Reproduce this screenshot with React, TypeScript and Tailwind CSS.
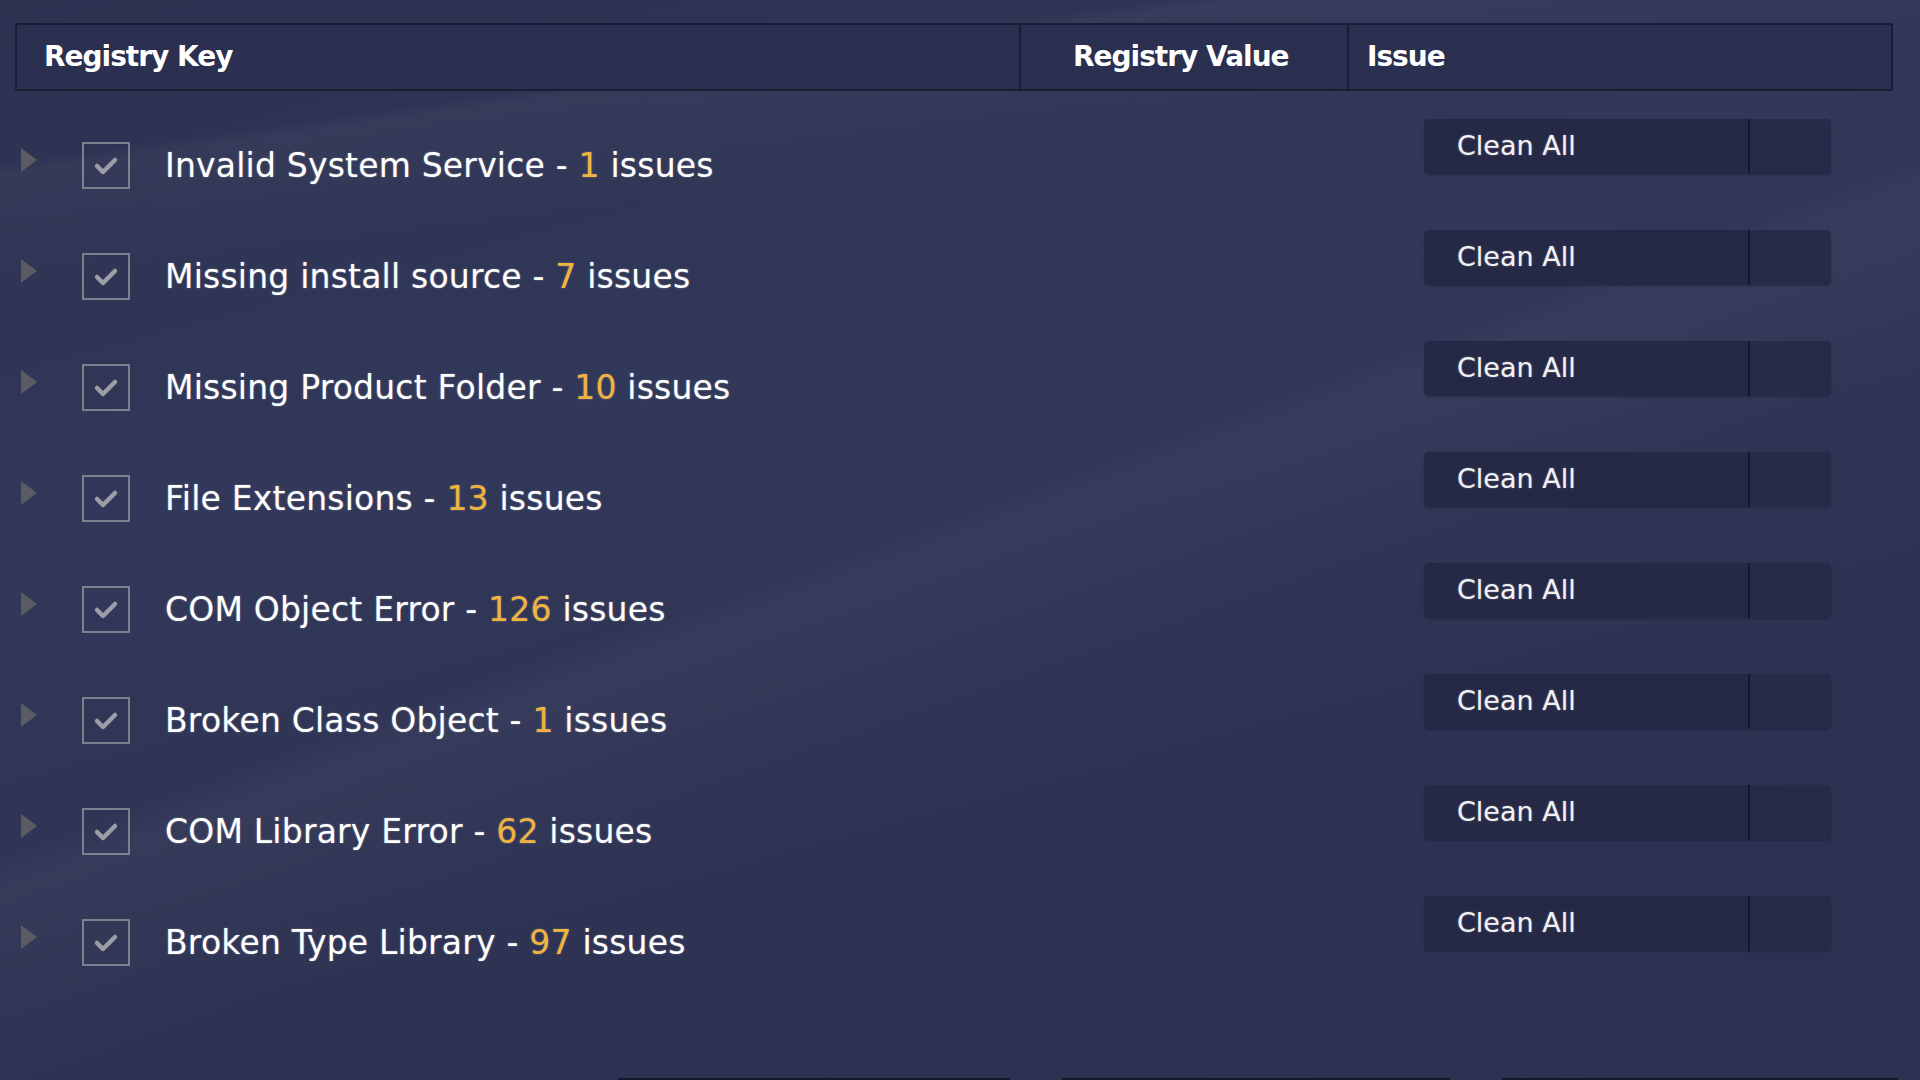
import React from 'react';

interface Category {
  name: string;
  count: number;
}

const categories: Category[] = [
  { name: 'Invalid System Service', count: 1 },
  { name: 'Missing install source', count: 7 },
  { name: 'Missing Product Folder', count: 10 },
  { name: 'File Extensions', count: 13 },
  { name: 'COM Object Error', count: 126 },
  { name: 'Broken Class Object', count: 1 },
  { name: 'COM Library Error', count: 62 },
  { name: 'Broken Type Library', count: 97 },
];

const font = { fontFamily: '"DejaVu Sans", Tahoma, Verdana, sans-serif' };

const Row: React.FC<{ item: Category }> = ({ item }) => (
  <div className="flex h-[111px] items-start">
    {/* expander */}
    <div className="mt-[38px] ml-[5px] w-[18px] h-[26px] flex items-center">
      <svg width="18" height="26" viewBox="0 0 18 26">
        <path d="M1 1 L17 13 L1 25 Z" fill="#5b5c63" />
      </svg>
    </div>

    {/* checkbox */}
    <div className="mt-[33px] ml-[44px] w-[48px] h-[47px] border-2 border-[#7d808f] flex items-center justify-center">
      <svg width="28" height="24" viewBox="0 0 28 24">
        <path d="M5 12 L11 18 L23 6" fill="none" stroke="#9c9da7" strokeWidth="4.5" strokeLinecap="round" strokeLinejoin="round" />
      </svg>
    </div>

    <div
      className="mt-[33px] ml-[35px] h-[47px] flex items-center text-[33px] tracking-[0.2px] text-white [text-shadow:0_0_2px_rgba(255,255,255,0.35)] flex-1 whitespace-pre"
      style={font}
    >
      {item.name} - <span className="text-[#f0b43c]">{item.count}</span> issues
    </div>

    {/* clean button */}
    <div className="mt-[10px] mr-[89px] w-[407px] h-[55px] rounded-[5px] bg-[#252945] flex shadow-[0_1px_2px_rgba(0,0,0,0.25)]">
      <div className="w-[326px] h-full flex items-center pl-[33px] border-r-2 border-[#15172a]">
        <span className="text-[27px] text-[#f2f2f5] [text-shadow:0_0_2px_rgba(255,255,255,0.35)]" style={font}>
          Clean All
        </span>
      </div>
      <div className="flex-1 h-full bg-[#272b47] rounded-r-[5px]" />
    </div>
  </div>
);

export default function App() {
  return (
    <div className="w-[1920px] h-[1080px] overflow-hidden relative bg-[linear-gradient(165deg,#2c3150_0%,#323859_35%,#2f3454_60%,#2d3050_100%)] flex flex-col">
      {/* faint diagonal streaks */}
      <div className="absolute inset-0 pointer-events-none bg-[linear-gradient(172deg,transparent_0%,transparent_12%,rgba(255,255,255,0.035)_13%,transparent_22%,transparent_100%)]" />
      <div className="absolute inset-0 pointer-events-none bg-[linear-gradient(160deg,transparent_0%,transparent_48%,rgba(255,255,255,0.03)_50%,transparent_62%,transparent_100%)]" />

      <div className="relative flex flex-col flex-1 pt-[23px]">
        {/* table header */}
        <div className="ml-[15px] mr-[27px] flex h-[68px] border-2 border-[#1b1e33] bg-[#2c3050] text-white" style={font}>
          <div className="w-[1004px] flex items-center pl-[27px] border-r-2 border-[#1b1e33] text-[28px] font-bold tracking-[-1px]">
            Registry Key
          </div>
          <div className="w-[328px] flex items-center pl-[52px] border-r-2 border-[#1b1e33] text-[28px] font-bold tracking-[-1px]">
            Registry Value
          </div>
          <div className="flex-1 flex items-center pl-[18px] text-[28px] font-bold tracking-[-1px]">Issue</div>
        </div>

        {/* rows */}
        <div className="mt-[18px] pl-[15px] flex flex-col">
          {categories.map((c) => (
            <Row key={c.name} item={c} />
          ))}
        </div>
      </div>

      {/* bottom edge bars */}
      <div className="relative flex h-[2px] pl-[618px] gap-[52px]">
        <div className="w-[392px] h-full bg-[#15172a]" />
        <div className="w-[388px] h-full bg-[#15172a]" />
        <div className="w-[396px] h-full bg-[#15172a]" />
      </div>
    </div>
  );
}
